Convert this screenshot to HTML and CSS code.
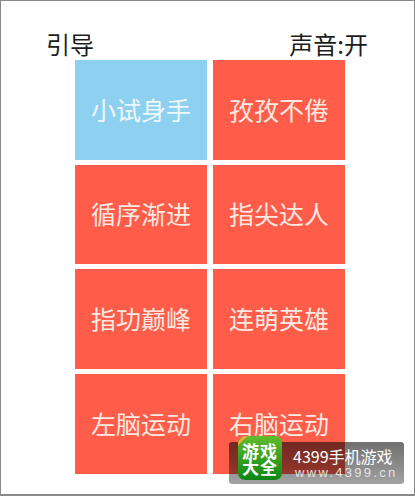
FILE: index.html
```html
<!DOCTYPE html>
<html lang="zh">
<head>
    <meta charset="UTF-8">
    <title>引导</title>
    <link rel="stylesheet" href="styles.css">
</head>
<body>

<div class="screen">
    <div class="top-bar">
        <span>引导</span>
        <span>声音:开</span>
    </div>
    <div class="levels">
        <div class="level done">小试身手</div>
        <div class="level">孜孜不倦</div>
        <div class="level">循序渐进</div>
        <div class="level">指尖达人</div>
        <div class="level">指功巅峰</div>
        <div class="level">连萌英雄</div>
        <div class="level">左脑运动</div>
        <div class="level">右脑运动</div>
    </div>
</div>

<div class="badge">
    <div class="badge-logo">
        <i class="badge-ribbon"></i>
        <span>游戏</span>
        <span>大全</span>
    </div>
    <div class="badge-text">
        <div class="badge-title">4399手机游戏</div>
        <div class="badge-url">www.4399.cn</div>
    </div>
</div>

</body>
</html>
```

FILE: styles.css
```css
html, body {
    margin: 0;
    padding: 0;
}

body {
    width: 415px;
    height: 496px;
    overflow: hidden;
    background: #ffffff;
    font-family: "Noto Sans CJK SC", "Liberation Sans", sans-serif;
}

.screen {
    box-sizing: border-box;
    width: 415px;
    height: 496px;
    padding-top: 29px;
    border: 1px solid #8a8a8a;
    border-bottom-width: 2px;
}

.top-bar {
    display: flex;
    justify-content: space-between;
    height: 30px;
    padding: 0 46px 0 45px;
    font-size: 24px;
    line-height: 28px;
    color: #1c1c1c;
}

.levels {
    display: grid;
    grid-template-columns: 132px 132px;
    grid-auto-rows: 99.5px;
    gap: 5.2px 6px;
    margin-left: 74px;
}

.level {
    display: flex;
    align-items: center;
    justify-content: center;
    padding-bottom: 2px;
    box-sizing: border-box;
    background: #ff5c4a;
    color: #fde9e0;
    font-size: 25px;
}

.done {
    background: #8ed0ef;
    color: #eef8fb;
}

.badge {
    position: absolute;
    left: 229px;
    top: 442px;
    width: 175px;
    height: 42px;
    border-radius: 3px;
    background: linear-gradient(rgba(0, 0, 0, 0.56), rgba(0, 0, 0, 0.46) 55%, rgba(0, 0, 0, 0.36));
}

.badge-logo {
    position: absolute;
    left: 9px;
    top: -6px;
    overflow: hidden;
    box-sizing: border-box;
    width: 44px;
    height: 44px;
    padding-top: 7px;
    border-radius: 7px;
    background: linear-gradient(#62bb2c, #0d8614);
    color: #ffffff;
    font-size: 17px;
    font-weight: 700;
    line-height: 16px;
    text-align: center;
    letter-spacing: 1px;
}

.badge-ribbon {
    position: absolute;
    left: -7px;
    top: 2px;
    width: 22px;
    height: 3px;
    background: #f2a93b;
    transform: rotate(-45deg);
}

.badge-logo span {
    display: block;
    height: 16px;
}

.badge-text {
    margin-left: 64px;
    padding-top: 5px;
    color: #ffffff;
}

.badge-title {
    font-size: 16px;
    line-height: 18px;
    white-space: nowrap;
}

.badge-url {
    margin-top: 1px;
    margin-left: 2px;
    font-family: "Liberation Sans", sans-serif;
    font-size: 13px;
    line-height: 14px;
    letter-spacing: 2.3px;
    white-space: nowrap;
    color: #e4e4e4;
}
```
